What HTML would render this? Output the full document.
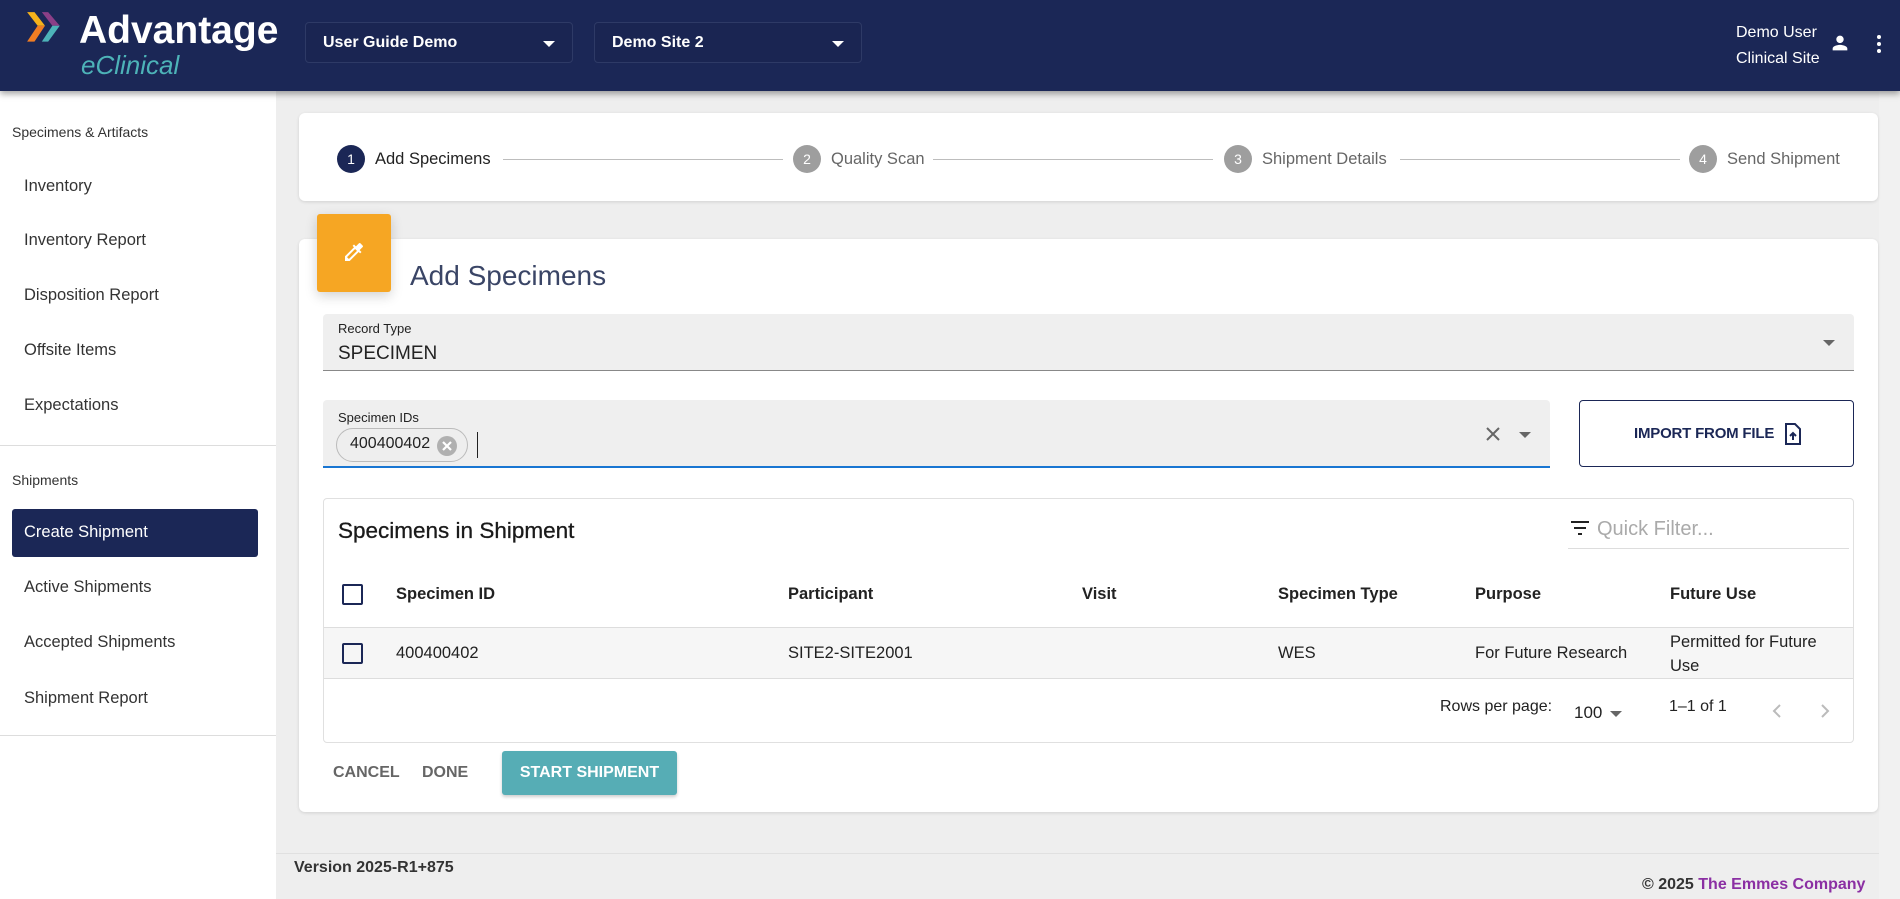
<!DOCTYPE html>
<html><head><meta charset="utf-8"><style>
*{box-sizing:border-box;margin:0;padding:0}
body{width:1900px;height:899px;overflow:hidden;background:#eeeeee;font-family:"Liberation Sans",Arial,sans-serif;position:relative;color:#212121}
.a{position:absolute}
.hdr{left:0;top:0;width:1900px;height:91px;background:#1b2756;box-shadow:0 3px 6px rgba(0,0,0,.35);z-index:3}
.dd{top:22px;height:41px;border:1px solid #2e3a66;border-radius:4px;background:#1a2552;color:#fff;font-weight:bold;font-size:16px;padding:11px 17px}
.tri{position:absolute;width:0;height:0;border-left:6px solid transparent;border-right:6px solid transparent;border-top:6px solid currentColor}
.side{left:0;top:91px;width:276px;height:808px;background:#fff}
.si{left:24px;font-size:16.5px;color:#333}
.sh{left:12px;font-size:14px;color:#333}
.card{background:#fff;border-radius:6px;box-shadow:0 1px 3px rgba(0,0,0,.12)}
.circ{width:28px;height:28px;border-radius:50%;background:#9e9e9e;color:#fff;font-size:14px;text-align:center;line-height:28px;top:145px}
.sl{top:150px;font-size:16.5px;color:#666}
.ln{top:159px;height:1px;background:#bdbdbd}
.th{top:585px;font-weight:bold;font-size:16.5px;color:#222}
.td{top:644px;font-size:16.5px;color:#222}
.cb{width:21px;height:21px;border:2px solid #1b2756;border-radius:2px}
</style></head><body>
<div class="a hdr">
 <svg class="a" style="left:25px;top:9px" width="40" height="42" viewBox="0 0 38 38">
  <polygon points="2,2 9,2 19,15 12,15" fill="#f6b21b"/>
  <polygon points="12,15 19,15 9,30 2,30" fill="#f07d23"/>
  <polygon points="16,2 22,2 33,15 26,15" fill="#8b3f87"/>
  <polygon points="26,15 33,15 22,30 16,30" fill="#4db3b8"/>
 </svg>
 <div class="a" style="left:79px;top:9px;color:#fff;font-weight:bold;font-size:39px">Advantage</div>
 <div class="a" style="left:81px;top:50px;color:#4db3b8;font-style:italic;font-size:26px">eClinical</div>
 <div class="a dd" style="left:305px;width:268px">User Guide Demo<span class="tri" style="right:17px;top:18px"></span></div>
 <div class="a dd" style="left:594px;width:268px">Demo Site 2<span class="tri" style="right:17px;top:18px"></span></div>
 <div class="a" style="left:1736px;top:20px;color:#fff;font-size:16px;line-height:26px">Demo User<br>Clinical Site</div>
 <svg class="a" style="left:1829px;top:32px" width="22" height="22" viewBox="0 0 24 24"><path fill="#fff" d="M12 12c2.2 0 4-1.8 4-4s-1.8-4-4-4-4 1.8-4 4 1.8 4 4 4zm0 2c-2.7 0-8 1.3-8 4v2h16v-2c0-2.7-5.3-4-8-4z"/></svg>
 <svg class="a" style="left:1867px;top:32px" width="24" height="24" viewBox="0 0 24 24"><circle cx="12" cy="5" r="2" fill="#fff"/><circle cx="12" cy="12" r="2" fill="#fff"/><circle cx="12" cy="19" r="2" fill="#fff"/></svg>
</div>
<div class="a" style="left:1879px;top:91px;width:21px;height:808px;background:#f1f1f1"></div>
<div class="a side">
 <div class="a sh" style="top:33px">Specimens &amp; Artifacts</div>
 <div class="a si" style="top:86px">Inventory</div>
 <div class="a si" style="top:140px">Inventory Report</div>
 <div class="a si" style="top:195px">Disposition Report</div>
 <div class="a si" style="top:250px">Offsite Items</div>
 <div class="a si" style="top:305px">Expectations</div>
 <div class="a" style="left:0;top:354px;width:276px;height:1px;background:#ddd"></div>
 <div class="a sh" style="top:381px">Shipments</div>
 <div class="a" style="left:12px;top:418px;width:246px;height:48px;background:#1b2756;border-radius:3px"></div>
 <div class="a si" style="top:432px;color:#fff">Create Shipment</div>
 <div class="a si" style="top:487px">Active Shipments</div>
 <div class="a si" style="top:542px">Accepted Shipments</div>
 <div class="a si" style="top:598px">Shipment Report</div>
 <div class="a" style="left:0;top:644px;width:276px;height:1px;background:#ddd"></div>
</div>
<div class="a card" style="left:299px;top:113px;width:1579px;height:88px"></div>
<div class="a circ" style="left:337px;background:#1b2756">1</div>
<div class="a sl" style="left:375px;color:#222">Add Specimens</div>
<div class="a ln" style="left:503px;width:280px"></div>
<div class="a circ" style="left:793px">2</div>
<div class="a sl" style="left:831px">Quality Scan</div>
<div class="a ln" style="left:933px;width:280px"></div>
<div class="a circ" style="left:1224px">3</div>
<div class="a sl" style="left:1262px">Shipment Details</div>
<div class="a ln" style="left:1400px;width:280px"></div>
<div class="a circ" style="left:1689px">4</div>
<div class="a sl" style="left:1727px">Send Shipment</div>

<div class="a card" style="left:299px;top:239px;width:1579px;height:573px"></div>
<div class="a" style="left:317px;top:214px;width:74px;height:78px;background:#f6a623;border-radius:3px;box-shadow:0 4px 12px rgba(0,0,0,.18)"></div>
<svg class="a" style="left:342px;top:240px" width="24" height="24" viewBox="0 0 24 24"><path fill="#fff" d="M20.7 5.6l-2.3-2.3c-.4-.4-1-.4-1.4 0l-3.1 3.1-1.9-1.9-1.4 1.4 1.4 1.4L3 16.3V21h4.7l9-9 1.4 1.4 1.4-1.4-1.9-1.9 3.1-3.1c.4-.4.4-1 0-1.4zM6.9 19L5 17.1l8.1-8.1 1.9 1.9L6.9 19z"/></svg>
<div class="a" style="left:410px;top:260px;font-size:28px;color:#3a4566">Add Specimens</div>

<div class="a" style="left:323px;top:314px;width:1531px;height:57px;background:#efefef;border-bottom:1px solid #888;border-radius:4px 4px 0 0"></div>
<div class="a" style="left:338px;top:321px;font-size:13px;color:#222">Record Type</div>
<div class="a" style="left:338px;top:343px;font-size:19px;color:#222">SPECIMEN</div>
<span class="tri a" style="left:1823px;top:340px;color:#666"></span>

<div class="a" style="left:323px;top:400px;width:1227px;height:68px;background:#efefef;border-bottom:2px solid #1976d2;border-radius:4px 4px 0 0"></div>
<div class="a" style="left:338px;top:410px;font-size:13px;color:#222">Specimen IDs</div>
<div class="a" style="left:336px;top:428px;width:132px;height:34px;border:1px solid #bbb;border-radius:17px;background:#eee"></div>
<div class="a" style="left:350px;top:435px;font-size:16px;color:#222">400400402</div>
<svg class="a" style="left:436px;top:435px" width="22" height="22" viewBox="0 0 22 22"><circle cx="11" cy="11" r="10" fill="#b0b0b0"/><path d="M7 7l8 8M15 7l-8 8" stroke="#fff" stroke-width="2.2"/></svg>
<div class="a" style="left:477px;top:432px;width:1px;height:26px;background:#222"></div>
<svg class="a" style="left:1484px;top:425px" width="18" height="18" viewBox="0 0 18 18"><path d="M3 3l12 12M15 3L3 15" stroke="#666" stroke-width="2"/></svg>
<span class="tri a" style="left:1519px;top:432px;color:#666"></span>

<div class="a" style="left:1579px;top:400px;width:275px;height:67px;border:1.5px solid #1b2756;border-radius:4px"></div>
<div class="a" style="left:1634px;top:425px;font-size:15px;font-weight:bold;color:#1b2756;letter-spacing:-0.2px">IMPORT FROM FILE</div>
<svg class="a" style="left:1784px;top:423px" width="18" height="22" viewBox="0 0 18 22"><path d="M2 1h9l5 5v15H2z" fill="none" stroke="#1b2756" stroke-width="2"/><path d="M9 17V10M6 13l3-3 3 3" stroke="#1b2756" stroke-width="2" fill="none"/></svg>

<div class="a" style="left:323px;top:498px;width:1531px;height:245px;border:1px solid #e0e0e0;border-radius:4px"></div>
<div class="a" style="left:338px;top:518px;font-size:22.5px;color:#1a1a1a;-webkit-text-stroke:0.3px #1a1a1a">Specimens in Shipment</div>
<svg class="a" style="left:1570px;top:520px" width="20" height="16" viewBox="0 0 20 16"><path d="M1 2h18M4 8h12M8 14h4" stroke="#222" stroke-width="2"/></svg>
<div class="a" style="left:1597px;top:518px;font-size:20px;color:#aaa">Quick Filter...</div>
<div class="a" style="left:1568px;top:548px;width:281px;height:1px;background:#ddd"></div>
<div class="a cb" style="left:342px;top:584px"></div>
<div class="a th" style="left:396px">Specimen ID</div>
<div class="a th" style="left:788px">Participant</div>
<div class="a th" style="left:1082px">Visit</div>
<div class="a th" style="left:1278px">Specimen Type</div>
<div class="a th" style="left:1475px">Purpose</div>
<div class="a th" style="left:1670px">Future Use</div>
<div class="a" style="left:324px;top:627px;width:1529px;height:52px;background:#f6f6f6;border-top:1px solid #ddd;border-bottom:1px solid #ddd"></div>
<div class="a cb" style="left:342px;top:643px"></div>
<div class="a td" style="left:396px">400400402</div>
<div class="a td" style="left:788px">SITE2-SITE2001</div>
<div class="a td" style="left:1278px">WES</div>
<div class="a td" style="left:1475px">For Future Research</div>
<div class="a" style="left:1670px;top:630px;font-size:16.5px;line-height:24px;color:#222">Permitted for Future<br>Use</div>
<div class="a" style="left:1440px;top:698px;font-size:16px;color:#222">Rows per page:</div>
<div class="a" style="left:1574px;top:703px;font-size:17px;color:#222">100</div>
<span class="tri a" style="left:1610px;top:711px;color:#666"></span>
<div class="a" style="left:1669px;top:698px;font-size:16px;color:#222">1–1 of 1</div>
<svg class="a" style="left:1770px;top:702px" width="14" height="18" viewBox="0 0 14 18"><path d="M10 3L4 9l6 6" stroke="#bbb" stroke-width="2" fill="none"/></svg>
<svg class="a" style="left:1818px;top:702px" width="14" height="18" viewBox="0 0 14 18"><path d="M4 3l6 6-6 6" stroke="#bbb" stroke-width="2" fill="none"/></svg>

<div class="a" style="left:333px;top:764px;font-size:16px;font-weight:bold;color:#666">CANCEL</div>
<div class="a" style="left:422px;top:764px;font-size:16px;font-weight:bold;color:#666">DONE</div>
<div class="a" style="left:502px;top:751px;width:175px;height:44px;background:#56adb5;border-radius:3px;box-shadow:0 2px 3px rgba(0,0,0,.2);color:#fff;font-weight:bold;font-size:16px;text-align:center;line-height:44px">START SHIPMENT</div>

<div class="a" style="left:276px;top:853px;width:1603px;height:1px;background:#e0e0e0"></div>
<div class="a" style="left:294px;top:859px;font-size:16px;font-weight:bold;color:#333">Version 2025-R1+875</div>
<div class="a" style="left:1642px;top:876px;font-size:16px;font-weight:bold;color:#333">© 2025 <span style="color:#8b2fa3">The Emmes Company</span></div>
</body></html>
